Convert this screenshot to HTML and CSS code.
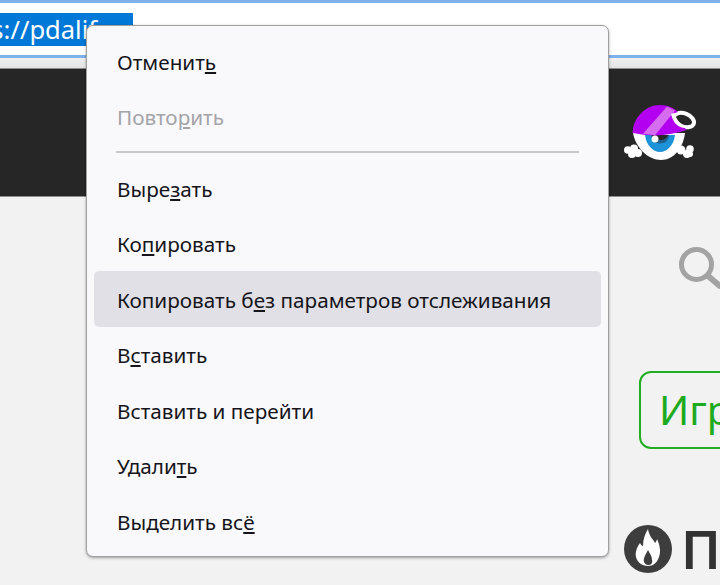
FILE: index.html
```html
<!DOCTYPE html>
<html lang="ru">
<head>
<meta charset="utf-8">
<title>Контекстное меню</title>
<link rel="stylesheet" href="styles.css">
</head>
<body>
<div class="urlbar">
  <div class="selection">https://pdalif</div>
</div>
<div class="strip"></div>
<header class="site-header">
  <svg class="logo" viewBox="0 0 74 56" width="74" height="56">
    <g fill="#fff">
      <circle cx="3.800" cy="45" r="3.800"/><circle cx="10" cy="43.500" r="4"/><circle cx="8" cy="49" r="4"/><circle cx="14" cy="48" r="4"/>
      <circle cx="66" cy="44" r="3.800"/><circle cx="63" cy="49" r="4"/><circle cx="57" cy="45" r="4.500"/><circle cx="66" cy="49" r="3"/>
      <path d="M9 28 C12 44 25 55 37 55 C49 55 59 44 61 28z"/>
    </g>
    <path d="M21 30 C22 40 29 47 36 47 C43 47 50 40 51 30z" fill="#1d92d8"/>
    <path d="M27 30 C27 35 31 38.500 36 38.500 C41 38.500 45 35 45 30z" fill="#1f5f8c"/>
    <path d="M28 30 C29 33 32 35 36 35 C40 35 43 33 44 30z" fill="#262626"/>
    <ellipse cx="60" cy="15" rx="10.500" ry="6.500" transform="rotate(22 60 15)" fill="#262626" stroke="#fff" stroke-width="4"/>
    <path d="M8.700 28 C9 13 21 0 36 0 C44 0 50 3 54 7 L48 9 C50 15 54 20 60 22 L62.700 25 Q36 34 8.700 28z" fill="#b400f0"/>
    <path d="M19 28.800 L43 1.500 L51 5.500 L31 30.300z" fill="#d66cf0"/>
    <path d="M47 9 C49 18 55 24 63 23 C57 20 52 14 50 8z" fill="#fff"/>
    <circle cx="31" cy="34" r="3.500" fill="#fff"/>
  </svg>
  <span class="brand">pdalife</span>
</header>
<main class="content">
  <svg class="search" viewBox="0 0 42 42" width="42" height="42">
    <circle cx="17.500" cy="17.500" r="15" fill="none" stroke="#a3a3a3" stroke-width="5"/>
    <path d="M28 28 L42 40" stroke="#a3a3a3" stroke-width="6"/>
  </svg>
  <div class="tag">Игры</div>
  <h2 class="section">
    <svg class="flame" viewBox="0 0 48 48" width="48" height="48">
      <circle cx="24" cy="24" r="24" fill="#3d3d3d"/>
      <path d="M24 4 C25 11 29 14 31 18 C32 17 33 15 33 14 C36 20 37 27 35 32 C33 38 29 41 24 41 C18 41 13 37 12 32 C11 27 13 22 16 18 C17 20 18 21 19 21 C19 14 21 9 24 4z" fill="#fff"/>
      <path d="M24 25 C22 29 19 33 20 37 C21 39 22 40 24 40 C27 40 29 38 28 35 C28 31 26 29 24 25z" fill="#3d3d3d"/>
    </svg>
    <span>Популярное</span>
  </h2>
</main>
<nav class="menu">
  <div class="item">Отменит<u>ь</u></div>
  <div class="item disabled">Повто<u>р</u>ить</div>
  <hr class="sep">
  <div class="item">Выре<u>з</u>ать</div>
  <div class="item">Ко<u>п</u>ировать</div>
  <div class="item active">Копировать б<u>е</u>з параметров отслеживания</div>
  <div class="item">В<u>с</u>тавить</div>
  <div class="item">Вставить и перейти</div>
  <div class="item">Удали<u>т</u>ь</div>
  <div class="item">Выделить вс<u>ё</u></div>
</nav>
</body>
</html>
```
FILE: styles.css
```css
* { box-sizing: border-box; }
html, body { margin: 0; height: 100%; overflow: hidden; }
body {
  width: 720px;
  height: 585px;
  background: #f2f2f2;
  font-family: "Noto Sans", "Open Sans", sans-serif;
  position: relative;
}
.urlbar {
  height: 58px;
  background: #fff;
  border-top: 3px solid #7eb0ec;
  border-bottom: 3px solid #7eb0ec;
  padding-top: 10px;
}
.selection {
  width: 133px;
  height: 33px;
  background: #0078d7;
  color: #fff;
  font-size: 25.500px;
  line-height: 33px;
  white-space: nowrap;
  display: flex;
  justify-content: flex-end;
  overflow: hidden;
  padding-right: 36px;
}
.strip {
  height: 10px;
  background: linear-gradient(#f0f0f0, #e4e4e4);
}
.site-header {
  height: 129px;
  background: #262626;
  border-top: 1px solid #8c8c8c;
  border-bottom: 1px solid #8c8c8c;
  display: flex;
  align-items: center;
  padding-left: 624px;
  gap: 21px;
  white-space: nowrap;
}
.logo { flex: none; }
.brand { color: #fff; font-size: 34px; font-weight: 700; }
.content {
  padding: 50px 0 0 639px;
  display: flex;
  flex-direction: column;
  align-items: flex-start;
  white-space: nowrap;
}
.search { margin-left: 40px; flex: none; }
.tag {
  margin-top: 82px;
  width: 200px;
  height: 78px;
  border: 2px solid #22ad22;
  border-radius: 12px;
  color: #1eaa1e;
  font-size: 40px;
  line-height: 74px;
  padding-left: 18px;
  flex: none;
}
.section {
  margin: 76px 0 0 -15px;
  display: flex;
  align-items: center;
  gap: 9px;
  font-size: 53px;
  font-weight: 600;
  color: #333;
  line-height: 48px;
}
.flame { flex: none; }
.menu {
  position: absolute;
  left: 86px;
  top: 25px;
  width: 523px;
  height: 532px;
  background: #f9f9fb;
  border: 1px solid #a0a0a0;
  border-radius: 7px;
  box-shadow: 0 1px 3px rgba(0,0,0,.35);
  padding: 7px 7px;
}
.item {
  height: 55.500px;
  padding: 2px 0 0 23px;
  display: flex;
  align-items: center;
  white-space: pre;
  font-size: 20.700px;
  color: #15141a;
  border-radius: 5px;
}
.item u { text-underline-offset: 2px; text-decoration-thickness: 1.500px; }
.disabled { color: #a3a3a8; }
.active { background: #e0e0e6; }
.sep {
  margin: 7px 22px;
  border: 0;
  height: 2px;
  background: #c9c9cc;
}
```
